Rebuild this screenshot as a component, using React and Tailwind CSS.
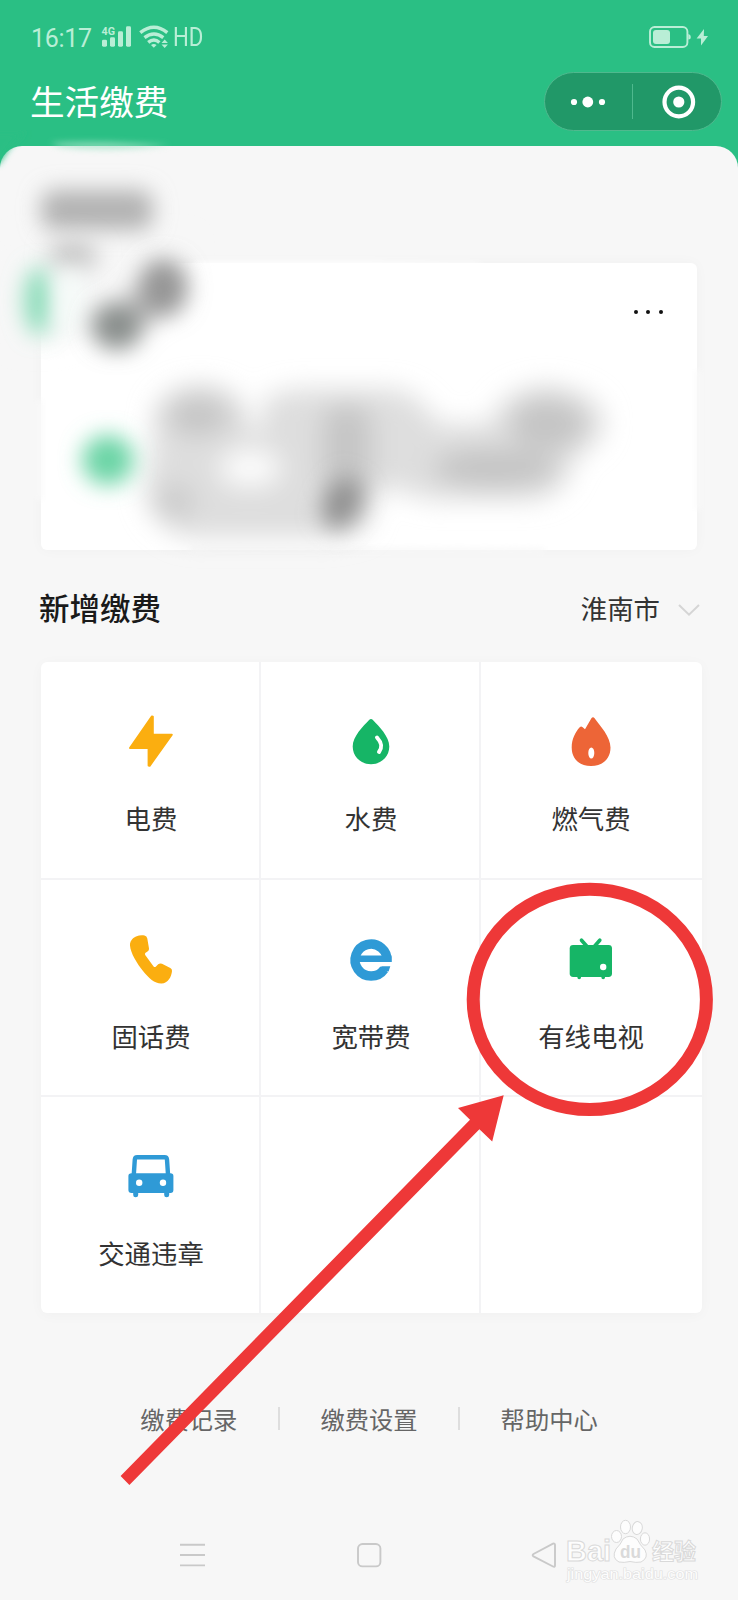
import React from 'react';

/* ── Service icons, all on a 60x60 box ── */
const BoltIcon = () => (
  <svg viewBox="0 0 60 60" className="w-[60px] h-[60px]" fill="#fbae10" stroke="#fbae10" strokeWidth="2" strokeLinejoin="round">
    <path d="M31 4.4 L31.8 4.6 L31.8 22.7 L50.8 22.7 L28.6 53.8 L27.6 53.6 L27.6 36 L9 36 Z" />
  </svg>
);

const DropIcon = () => (
  <svg viewBox="0 0 60 60" className="w-[60px] h-[60px]" fill="none">
    <path d="M28.3 7.8 Q30 6 31.7 7.8 C38 14.5 48.3 24.5 48.3 34.5 C48.3 44.5 40.2 52.2 30 52.2 C19.8 52.2 11.7 44.5 11.7 34.5 C11.7 24.5 22 14.5 28.3 7.8 Z" fill="#16b566" />
    <path d="M36 25.5 C40.5 30.5 42 34.5 38 40" stroke="#fff" strokeWidth="4" strokeLinecap="round" />
  </svg>
);

const FlameIcon = () => (
  <svg viewBox="0 0 60 60" className="w-[60px] h-[60px]">
    <path d="M30.4 6.3 Q32 4.4 33.6 6.3 C39 13.5 49.5 25 49.5 35.5 C49.5 46.5 42 54 30 54 C18 54 10.7 46.5 10.7 35.5 C10.7 27 14.5 20 18.7 15.3 Q20 14 21.4 15 L24 17.3 Z" fill="#ed6537" />
    <ellipse cx="30.3" cy="41" rx="3" ry="5.6" fill="#fff" />
  </svg>
);

const PhoneIcon = () => (
  <svg viewBox="0 0 60 60" className="w-[60px] h-[60px]">
    <path d="M15 6.5 C18 5.2 21 5 23.5 5.5 Q25.8 6 26.3 8.5 L28 18.5 Q28.3 20.5 26.5 21.6 L24.6 22.7 Q23.4 23.6 24.2 25 L32.6 36.4 Q33.8 37.6 35 36.4 L37.2 34.3 Q39 32.8 41 33.8 L49.3 38 Q51.2 39 51 41 C50.6 46.5 47 53.5 40.5 53.6 C34 53.8 27.5 48 22 41 C16 33.5 9.5 23 9 15.5 C8.8 11.5 11.2 8.2 15 6.5 Z" fill="#fbae10" />
  </svg>
);

const BroadbandIcon = () => (
  <svg viewBox="0 0 60 60" className="w-[60px] h-[60px]" fill="none" stroke="#2f9ad6">
    <path d="M46 31.5 A16 16 0 1 0 43.2 39.2" strokeWidth="9.4" />
    <path d="M18 28.7 H50.4" strokeWidth="6.6" />
    <path d="M40.5 36.2 H49.3 L47.6 41.5 L39 39.5 Z" fill="#2f9ad6" stroke="none" />
  </svg>
);

const TvIcon = () => (
  <svg viewBox="0 0 60 60" className="w-[60px] h-[60px]">
    <path d="M20.5 10.2 L26 16.5 M38.8 10.2 L33.3 16.5 M18.2 46 V47.5 M42.2 46 V47.5" stroke="#16b566" strokeWidth="3.6" strokeLinecap="round" />
    <rect x="8.7" y="15" width="42.3" height="32" rx="3.4" fill="#16b566" />
    <circle cx="42.2" cy="37" r="3.2" fill="#fff" />
  </svg>
);

const CarIcon = () => (
  <svg viewBox="0 0 60 60" className="w-[60px] h-[60px]">
    <path d="M12.8 27.5 L13.8 12.6 Q14 10.3 16.2 10.3 H43.6 Q45.8 10.3 46 12.6 L47 27.5" fill="none" stroke="#2f9ad6" strokeWidth="4.4" />
    <path d="M10.5 26.2 H49.5 Q52.4 26.2 52.4 29 V43 Q52.4 46 49.5 46 H48.2 V48 Q48.2 50.3 45.6 50.3 Q43.2 50.3 43.2 48 V46 H17.2 V48 Q17.2 50.3 14.6 50.3 Q12.2 50.3 12.2 48 V46 H10.5 Q7.4 46 7.4 43 V29 Q7.4 26.2 10.5 26.2 Z" fill="#2f9ad6" />
    <circle cx="18.2" cy="35.8" r="3.2" fill="#fff" />
    <circle cx="42" cy="35.8" r="3.2" fill="#fff" />
  </svg>
);

const SERVICES = [
  { label: '电费', icon: BoltIcon },
  { label: '水费', icon: DropIcon },
  { label: '燃气费', icon: FlameIcon },
  { label: '固话费', icon: PhoneIcon },
  { label: '宽带费', icon: BroadbandIcon },
  { label: '有线电视', icon: TvIcon },
  { label: '交通违章', icon: CarIcon },
  null,
  null,
];

const LINKS = ['缴费记录', '缴费设置', '帮助中心'];

function StatusBar() {
  return (
    <div className="h-[72px] pl-[31px] pr-[29px] flex items-center text-[#b9eed6] font-['Roboto',sans-serif]">
      <span className="w-[70px] text-[25px] leading-[30px] tracking-[-0.3px] mt-[5px]">16:17</span>
      <svg viewBox="0 0 72 26" className="w-[72px] h-[26px] mt-[2px]" fill="currentColor">
        <text x="0.5" y="10.5" fontSize="11.5" fontWeight="700" textLength="13.5" lengthAdjust="spacingAndGlyphs">4G</text>
        <rect x="1" y="15.7" width="5" height="7" rx="1.4" />
        <rect x="9" y="13.3" width="5" height="9.4" rx="1.4" />
        <rect x="17" y="7.3" width="5" height="15.4" rx="1.4" />
        <rect x="25" y="2.3" width="5" height="20.4" rx="1.4" />
        <g fill="none" stroke="currentColor" strokeWidth="3.4">
          <path d="M39.3 8.6 Q53 -2.2 66.3 8.6" />
          <path d="M43.5 13.6 Q53 6.2 62.3 13.6" />
          <path d="M47.2 18.4 Q53 13.6 58.4 18.4" />
        </g>
        <path d="M50 21 Q52.8 19 55.6 21 L52.8 23.8 Z" />
        <path d="M60.5 19 L63.7 15.6 L66.9 19 Z M60.5 20.6 L63.7 24 L66.9 20.6 Z" />
      </svg>
      <span className="inline-block origin-left scale-x-[0.89] text-[25px] leading-[30px] mt-[4px]">HD</span>
      <svg viewBox="0 0 60 24" className="w-[60px] h-[24px] ml-auto mt-[2px]">
        <rect x="1" y="2" width="37.4" height="20" rx="4.5" fill="none" stroke="currentColor" strokeWidth="1.9" />
        <rect x="4" y="5" width="17" height="14" rx="3" fill="currentColor" />
        <path d="M39.3 9 Q41.8 9.5 41.8 12 Q41.8 14.5 39.3 14.5 Z" fill="currentColor" />
        <path d="M55 4 L47.6 13.6 H52 V20.4 L59 11 H54.8 Z" fill="currentColor" />
      </svg>
    </div>
  );
}

function TitleBar() {
  return (
    <div className="h-[73.6px] pl-[30px] pr-[16px] flex items-start justify-between">
      <h1 className="text-[34.6px] leading-[50px] text-white mt-[3px]">生活缴费</h1>
      <div className="w-[178px] h-[59px] rounded-full bg-[#219868] border border-[#4fb98e] flex items-center">
        <svg viewBox="0 0 176 57" className="w-[176px] h-[57px]" fill="#fff">
          <circle cx="29" cy="29" r="3.1" />
          <circle cx="42.8" cy="29" r="5.4" />
          <circle cx="57" cy="29" r="3.1" />
          <rect x="87" y="11" width="1" height="35" fill="#4fb98e" />
          <circle cx="133.8" cy="29" r="14.3" fill="none" stroke="#fff" strokeWidth="4.2" />
          <circle cx="133.8" cy="29" r="5.6" />
        </svg>
      </div>
    </div>
  );
}

/* Blurred-out account details on top of the card */
function Smudges() {
  return (
    <svg viewBox="0 0 738 460" className="absolute left-0 top-[130px] w-[738px] h-[460px] pointer-events-none">
      <defs>
        <filter id="soft" x="-80%" y="-80%" width="260%" height="260%"><feGaussianBlur stdDeviation="11" /></filter>
        <filter id="softer" x="-50%" y="-50%" width="200%" height="200%"><feGaussianBlur stdDeviation="13" /></filter>
        <filter id="edge" x="-50%" y="-100%" width="200%" height="300%"><feGaussianBlur stdDeviation="3" /></filter>
      </defs>

      <path d="M-14 2 H26 Q12 14 8 20 Q4 26 -1 34 H-14 Z" fill="#2abf84" filter="url(#edge)" />
      <path d="M50 13 Q80 11 110 12 L170 15 Q110 23 60 17 Z" fill="#a5e3c8" opacity=".7" filter="url(#edge)" />

      {/* feathered card borders */}
      <path d="M190 140 L195 131 L350 131 L480 134 V142 H190 Z" fill="#fff" filter="url(#edge)" />
      <path d="M16 110 H190 L185 150 L60 215 H16 Z" fill="#f7f7f7" filter="url(#soft)" />
      <path d="M37 270 H43 V370 H37 Z M695 240 H700 V380 H695 Z" fill="#fafafa" filter="url(#edge)" />
      <path d="M190 417 L545 418 V423 H190 Z" fill="#f8f8f8" filter="url(#edge)" />

      <rect x="41" y="60" width="112" height="40" rx="14" fill="#b2b2b2" filter="url(#soft)" />
      <ellipse cx="73" cy="126" rx="25" ry="18" fill="#cacaca" filter="url(#soft)" />
      <ellipse cx="39" cy="171" rx="15" ry="34" fill="#8bdcb9" filter="url(#soft)" />
      <path d="M56 140 H84 V200 H56 Z" fill="#f6fbf9" filter="url(#soft)" />
      <g filter="url(#soft)">
        <ellipse cx="140" cy="178" rx="20" ry="22" fill="#c9c9c9" />
        <ellipse cx="163" cy="158" rx="25" ry="29" fill="#969696" />
        <ellipse cx="117" cy="196" rx="26" ry="24" fill="#8a8f8d" />
      </g>

      <g filter="url(#softer)">
        <ellipse cx="200" cy="290" rx="46" ry="35" fill="#d4d4d4" />
        <path d="M262 272 Q280 259 300 259 H395 Q420 265 438 294 H490 Q500 259 548 255 Q606 265 604 295 Q600 314 576 325 Q566 368 530 370 H430 Q400 360 380 356 L365 400 L330 408 H190 Q150 396 145 364 L155 300 H262 Z" fill="#dedede" />
        <ellipse cx="198" cy="288" rx="24" ry="18" fill="#c4c4c4" />
        <ellipse cx="250" cy="338" rx="30" ry="18" fill="#fdfdfd" />
        <rect x="322" y="274" width="50" height="90" rx="20" fill="#c6c6c6" />
        <ellipse cx="548" cy="294" rx="38" ry="26" fill="#c5c5c5" />
        <ellipse cx="495" cy="338" rx="62" ry="20" fill="#c5c5c5" />
        <ellipse cx="175" cy="372" rx="20" ry="18" fill="#cccccc" />
      </g>
      <ellipse cx="342" cy="373" rx="19" ry="27" transform="rotate(25 342 373)" fill="#929292" filter="url(#soft)" />
      <ellipse cx="108" cy="330" rx="26" ry="25" fill="#6ad4a5" filter="url(#soft)" />
    </svg>
  );
}

function AccountCard() {
  return (
    <div className="mt-[117px] ml-[41px] w-[656px] h-[287px] rounded-md bg-white shadow-[0_0_14px_rgba(0,0,0,0.03)] flex flex-col">
      <div className="flex justify-end gap-[8.4px] pt-[47px] pr-[34.5px]">
        <i className="w-[4px] h-[4px] rounded-full bg-[#111]" />
        <i className="w-[4px] h-[4px] rounded-full bg-[#111]" />
        <i className="w-[4px] h-[4px] rounded-full bg-[#111]" />
      </div>
    </div>
  );
}

function ServiceGrid() {
  return (
    <div className="ml-[41px] w-[661px] h-[651px] shrink-0 rounded-md overflow-hidden bg-[#f3f3f5] grid grid-cols-[218px_218px_221px] grid-rows-3 gap-[2px] shadow-[0_2px_14px_rgba(0,0,0,0.03)]">
      {SERVICES.map((s, i) => (
        <div key={i} className={`bg-white flex flex-col items-center pt-[50px] ${i % 3 === 2 ? 'pr-[1px]' : 'pl-[2px]'}`}>
          {s && (
            <>
              <s.icon />
              <span className="mt-[28px] text-[26.4px] leading-[36px] text-[#333]">{s.label}</span>
            </>
          )}
        </div>
      ))}
    </div>
  );
}

function NavBar() {
  return (
    <div className="mt-[86px] h-[60px] flex items-center pl-[178px]">
      <svg viewBox="0 0 380 30" className="w-[380px] h-[30px]" fill="none" stroke="#c9c9c9" strokeWidth="1.9">
        <path d="M2 4.8 H27 M2 15 H27 M2 25.4 H27" />
        <rect x="180" y="4" width="22.4" height="22.4" rx="4.5" />
        <path d="M355.5 14 L375 3.7 Q377 3 377 5 V25.4 Q377 27.4 375 26.5 L355.5 16.4 Q353.8 15.2 355.5 14 Z" />
      </svg>
    </div>
  );
}

/* Site watermark in the bottom right corner */
function Watermark() {
  return (
    <svg viewBox="0 0 140 70" className="absolute left-[563px] top-[1516px] w-[140px] h-[70px]" fontFamily="Liberation Sans, sans-serif">
      <g fill="#fdfdfd" stroke="#d9d9d9" strokeWidth="1">
        <text x="3" y="45" fontSize="29" fontWeight="700" textLength="45" lengthAdjust="spacingAndGlyphs">Bai</text>
        <ellipse cx="53.5" cy="20.5" rx="5" ry="6" />
        <ellipse cx="62.5" cy="11" rx="5" ry="6.7" />
        <ellipse cx="74.3" cy="12" rx="5" ry="6.5" transform="rotate(10 74 12)" />
        <ellipse cx="82" cy="23" rx="4.6" ry="6.2" />
        <path d="M60 23 Q67 17.5 74 23 Q77 29 82 34 Q86 42 78 46 Q73 47 67 45.5 Q61 47 56 46 Q48 42 53 33 Q58 28 60 23 Z" />
        <text x="89" y="43" fontSize="22" fontWeight="700" textLength="44" fontFamily="Noto Sans CJK SC, sans-serif">经验</text>
        <text x="57" y="42" fontSize="18" fontWeight="700" textLength="21" fill="#dadada" strokeWidth="0" lengthAdjust="spacingAndGlyphs">du</text>
      </g>
      <text x="4" y="63" fontSize="14" textLength="131" lengthAdjust="spacingAndGlyphs" fill="#fdfdfd" stroke="#e0e0e0" strokeWidth="1.2" paintOrder="stroke">jingyan.baidu.com</text>
    </svg>
  );
}

/* Red circle and arrow pointing at the cable TV entry */
function Annotation() {
  return (
    <svg viewBox="0 0 738 1600" className="absolute inset-0 w-[738px] h-[1600px] pointer-events-none">
      <ellipse cx="589.8" cy="999.4" rx="116.6" ry="110.2" fill="none" stroke="#ee3838" strokeWidth="13" />
      <path d="M120.6 1476 L470 1119.7 L458 1107.9 L503.7 1095.3 L492.2 1141.5 L479.4 1129.2 L129.4 1485 Z" fill="#ee3838" />
    </svg>
  );
}

export default function App() {
  return (
    <div className="relative w-[738px] h-[1600px] overflow-hidden bg-[#2abf84] font-['Noto_Sans_CJK_SC',sans-serif]">
      <StatusBar />
      <TitleBar />
      <main className="h-[1455px] bg-[#f7f7f7] rounded-t-[22px] flex flex-col">
        <AccountCard />
        <div className="h-[112.4px] pl-[39px] pr-[38px] flex items-center">
          <h2 className="text-[30.5px] leading-[44px] font-medium text-[#1a1a1a] mt-[3px]">新增缴费</h2>
          <span className="ml-auto text-[26.4px] leading-[36px] text-[#333] mt-[4px]">淮南市</span>
          <svg viewBox="0 0 22 14" className="w-[22px] h-[14px] ml-[18px] mt-[8px]" fill="none" stroke="#d5d5d5" strokeWidth="2">
            <path d="M1 2 L11 11.6 L21 2" />
          </svg>
        </div>
        <ServiceGrid />
        <div className="mt-[86px] h-[40px] flex items-center justify-center gap-[40.5px]">
          {LINKS.map((text, i) => (
            <React.Fragment key={text}>
              {i > 0 && <i className="w-[2px] h-[23px] bg-[#dedede]" />}
              <span className="text-[24.3px] leading-[34px] text-[#666]">{text}</span>
            </React.Fragment>
          ))}
        </div>
        <NavBar />
      </main>
      <Smudges />
      <Watermark />
      <Annotation />
    </div>
  );
}
